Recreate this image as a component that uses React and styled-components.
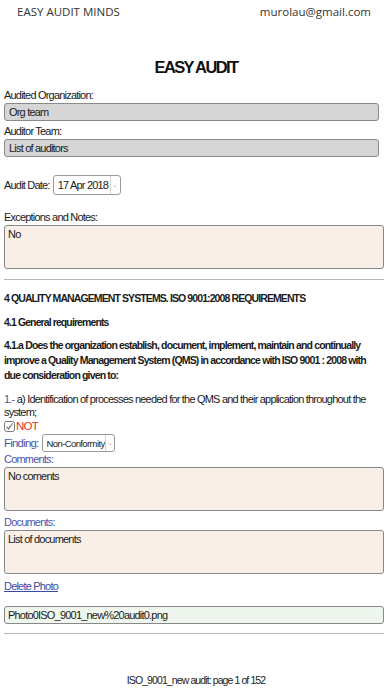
import React from 'react'
import styled, { createGlobalStyle } from 'styled-components'

const GlobalStyle = createGlobalStyle`
    body {
        margin: 0;
        background: #fff;
        font-family: "Liberation Sans", Arial, sans-serif;
        color: #1a1a1a;
    }
`

function App() {
    return (
        <Page>
            <GlobalStyle />
            <TopBar>
                <span>EASY AUDIT MINDS</span>
                <span>murolau@gmail.com</span>
            </TopBar>
            <Title>EASY AUDIT</Title>

            <Label top={8}>Audited Organization:</Label>
            <GreyBox>Org team</GreyBox>
            <Label>Auditor Team:</Label>
            <GreyBox>List of auditors</GreyBox>

            <DateRow>
                <span>Audit Date:</span>
                <Select width={68}>
                    <span>17 Apr 2018</span>
                    <Caret>⌄</Caret>
                </Select>
            </DateRow>

            <Label top={12}>Exceptions and Notes:</Label>
            <Area>No</Area>
            <Rule top={10} />

            <Heading top={11}>4 QUALITY MANAGEMENT SYSTEMS. ISO 9001:2008 REQUIREMENTS</Heading>
            <Heading top={10}>4.1 General requirements</Heading>
            <Question>
                4.1.a Does the organization establish, document, implement, maintain and continually<br />
                improve a Quality Management System (QMS) in accordance with ISO 9001 : 2008 with<br />
                due consideration given to:
            </Question>

            <Item>
                <Blue>1.-</Blue> a) Identification of processes needed for the QMS and their application throughout the<br />
                system;
            </Item>
            <NotRow>
                <svg width="11" height="11" viewBox="0 0 11 11">
                    <rect x="0.5" y="0.5" width="10" height="10" rx="2" fill="none" stroke="#777" />
                    <path d="M2.5 5.5 L4.5 8 L8.5 2.5" fill="none" stroke="#777" strokeWidth="1.2" />
                    <path d="M2 9 L9 2" fill="none" stroke="#aaa" strokeWidth="0.8" />
                </svg>
                <span>NOT</span>
            </NotRow>
            <FindingRow>
                <Blue>Finding:</Blue>
                <Select width={73} small>
                    <span>Non-Conformity</span>
                    <Caret>⌄</Caret>
                </Select>
            </FindingRow>
            <BlueLabel>Comments:</BlueLabel>
            <Area>No coments</Area>
            <BlueLabel top={4}>Documents:</BlueLabel>
            <Area>List of documents</Area>
            <LinkText href="#">Delete Photo</LinkText>
            <PhotoBox>Photo0ISO_9001_new%20audit0.png</PhotoBox>
            <Rule top={9} />
            <Footer>ISO_9001_new audit: page 1 of 152</Footer>
        </Page>
    )
}

export default App

const Page = styled.div`
    width: 392px;
    height: 696px;
    box-sizing: border-box;
    padding: 0 4px;
    font-size: 11px;
    letter-spacing: -0.8px;
    overflow: hidden;
`

const TopBar = styled.div`
    display: flex;
    justify-content: space-between;
    box-sizing: border-box;
    height: 18px;
    padding: 4px 17px 0 13px;
    font-family: "Open Sans", "Liberation Sans", sans-serif;
    font-size: 11.5px;
    letter-spacing: 0;
    color: #333;
    line-height: 16px;
`

const Title = styled.div`
    text-align: center;
    font-weight: bold;
    font-size: 16.5px;
    letter-spacing: -1.6px;
    margin-top: 39px;
    line-height: 20px;
    color: #111;
`

const Label = styled.div`
    margin-top: ${p => p.top || 0}px;
    line-height: 14px;
    padding: 3px 0 1px;
    white-space: nowrap;
`

const GreyBox = styled.div`
    width: 375px;
    height: 18px;
    box-sizing: border-box;
    background: #d6d6d6;
    border: 1px solid #8a8a8a;
    border-radius: 3px;
    padding-left: 4px;
    line-height: 16px;
`

const DateRow = styled.div`
    display: flex;
    align-items: center;
    gap: 3px;
    margin-top: 18px;
    height: 20px;
    white-space: nowrap;
`

const Select = styled.div`
    display: flex;
    align-items: center;
    justify-content: space-between;
    width: ${p => p.width}px;
    height: ${p => (p.small ? 18 : 20)}px;
    box-sizing: border-box;
    border: 1px solid #9a9a9a;
    border-radius: 3px;
    padding-left: 4px;
    font-size: ${p => (p.small ? 9.5 : 11)}px;
    letter-spacing: ${p => (p.small ? -0.6 : -0.8)}px;
    background: #fff;
    white-space: nowrap;
`

const Caret = styled.span`
    display: flex;
    align-items: center;
    justify-content: center;
    width: 9px;
    height: 100%;
    border-left: 1px solid #d4d4d4;
    color: #bbb;
    font-size: 7px;
    letter-spacing: 0;
`

const Area = styled.div`
    width: 380px;
    height: 44px;
    box-sizing: border-box;
    background: #f8f0e7;
    border: 1px solid #888;
    border-radius: 3px;
    padding: 1px 3px;
    line-height: 14px;
`

const Rule = styled.hr`
    border: none;
    border-top: 1px solid #b5b5b5;
    margin: ${p => p.top}px 0 0;
    width: 380px;
`

const Heading = styled.div`
    font-weight: bold;
    font-size: 10.5px;
    letter-spacing: -0.9px;
    margin-top: ${p => p.top}px;
    line-height: 14px;
    white-space: nowrap;
`

const Question = styled.div`
    font-weight: bold;
    font-size: 10.5px;
    letter-spacing: -0.85px;
    margin-top: 9px;
    line-height: 15px;
    white-space: nowrap;
`

const Item = styled.div`
    margin-top: 10px;
    line-height: 13px;
    white-space: nowrap;
`

const Blue = styled.span`
    color: #4957a8;
`

const NotRow = styled.div`
    display: flex;
    align-items: center;
    gap: 1px;
    color: #e3321f;
    line-height: 14px;
    font-size: 11.5px;
`

const FindingRow = styled.div`
    display: flex;
    align-items: center;
    gap: 3px;
    margin-top: 1px;
    height: 18px;
    font-size: 11.5px;
`

const BlueLabel = styled.div`
    color: #4957a8;
    margin-top: ${p => p.top || 0}px;
    line-height: 14px;
    padding-bottom: 1px;
`

const LinkText = styled.a`
    display: block;
    width: max-content;
    color: #3a4aaa;
    margin-top: 6px;
    line-height: 13px;
`

const PhotoBox = styled.div`
    width: 380px;
    height: 18px;
    box-sizing: border-box;
    background: #eef6ee;
    border: 1px solid #888;
    border-radius: 3px;
    padding-left: 3px;
    line-height: 16px;
    margin-top: 13px;
`

const Footer = styled.div`
    text-align: center;
    margin-top: 40px;
    line-height: 13px;
    font-size: 10.5px;
    letter-spacing: -0.9px;
    color: #222;
`
